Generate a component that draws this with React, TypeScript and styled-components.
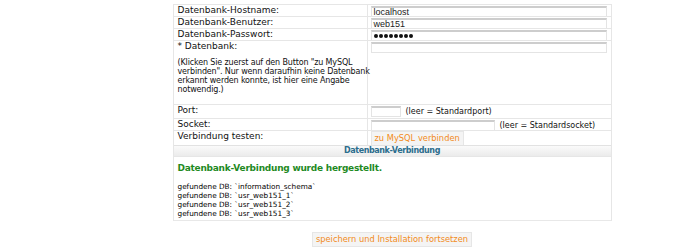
import * as React from "react";
import styled, { createGlobalStyle } from "styled-components";

const Global = createGlobalStyle`
  html, body { margin: 0; padding: 0; background: #fff; }
  body { font-family: "DejaVu Sans", Verdana, sans-serif; font-size: 9px; color: #111; }
  * { box-sizing: border-box; }
`;

const Page = styled.div`
  width: 700px;
  height: 248px;
  overflow: hidden;
  display: flex;
  flex-direction: column;
  align-items: center;
  padding-top: 4px;
`;

const Form = styled.div`
  width: 439px;
  margin-left: 84px;
  border-left: 1px solid #e6e6e6;
  border-right: 1px solid #e6e6e6;
  display: flex;
  flex-direction: column;
`;

const Row = styled.div<{ $h: number }>`
  display: grid;
  grid-template-columns: 194px 1fr;
  height: ${(p) => p.$h}px;
  border-top: 1px solid #e6e6e6;
`;

const Label = styled.div`
  padding-left: 4px;
  border-right: 1px solid #e6e6e6;
  line-height: 11px;
  white-space: nowrap;
`;

const Hint = styled.p`
  margin: 6px 0 0;
  font-size: 8px;
  letter-spacing: -0.15px;
  line-height: 9px;
`;

const Cell = styled.div`
  display: flex;
  align-items: flex-start;
  gap: 5px;
  padding-left: 3px;
  white-space: nowrap;
`;

const Input = styled.div<{ $w: number }>`
  width: ${(p) => p.$w}px;
  height: 11px;
  margin-top: 1px;
  border: 1px solid #e4e4e4;
  border-top: 2px solid #cdcdcd;
  background: #fff;
  padding-left: 2px;
  display: flex;
  align-items: center;
  gap: 1px;
  font-family: "Liberation Sans", Arial, sans-serif;
  font-size: 9px;
  line-height: 8px;
  color: #222;
`;

const Dot = styled.span`
  width: 4px;
  height: 4px;
  border-radius: 50%;
  background: #111;
`;

const Note = styled.span`
  font-size: 8px;
  line-height: 13px;
`;

const Button = styled.div`
  display: inline-block;
  height: 15px;
  background: #f4f4f4;
  border: 1px solid #e6e6e6;
  color: #f28b22;
  font-size: 8.3px;
  padding: 0 3px;
  line-height: 13px;
  white-space: nowrap;
`;

const Header = styled.div`
  height: 12px;
  border-top: 1px solid #e2e2e2;
  border-bottom: 1px solid #e6e6e6;
  background: linear-gradient(#fafafa, #ebebeb);
  text-align: center;
  font-size: 8px;
  font-weight: bold;
  letter-spacing: -0.4px;
  color: #2b6d8d;
  line-height: 10px;
`;

const Result = styled.div`
  border-bottom: 1px solid #e8e8e8;
  padding: 6px 4px 2px;
`;

const Success = styled.div`
  color: #1f8a1f;
  font-weight: bold;
  letter-spacing: -0.25px;
  line-height: 11px;
  margin-bottom: 8px;
`;

const Found = styled.div`
  font-size: 7.3px;
  line-height: 9px;
  color: #000;
`;

const Footer = styled.div`
  margin-top: 11px;
  margin-left: 84px;
`;

const dbs = ["information_schema", "usr_web151_1", "usr_web151_2", "usr_web151_3"];

export default function App() {
  return (
    <Page>
      <Global />
      <Form>
        <Row $h={12}>
          <Label>Datenbank-Hostname:</Label>
          <Cell><Input $w={236}>localhost</Input></Cell>
        </Row>
        <Row $h={12}>
          <Label>Datenbank-Benutzer:</Label>
          <Cell><Input $w={236}>web151</Input></Cell>
        </Row>
        <Row $h={12}>
          <Label>Datenbank-Passwort:</Label>
          <Cell>
            <Input $w={236}>
              {Array.from({ length: 8 }, (_, i) => <Dot key={i} />)}
            </Input>
          </Cell>
        </Row>
        <Row $h={64}>
          <Label>
            * Datenbank:
            <Hint>
              (Klicken Sie zuerst auf den Button "zu MySQL<br />
              verbinden". Nur wenn daraufhin keine Datenbank<br />
              erkannt werden konnte, ist hier eine Angabe<br />
              notwendig.)
            </Hint>
          </Label>
          <Cell><Input $w={236} /></Cell>
        </Row>
        <Row $h={14}>
          <Label>Port:</Label>
          <Cell><Input $w={30} /><Note>(leer = Standardport)</Note></Cell>
        </Row>
        <Row $h={12}>
          <Label>Socket:</Label>
          <Cell><Input $w={124} /><Note>(leer = Standardsocket)</Note></Cell>
        </Row>
        <Row $h={15}>
          <Label>Verbindung testen:</Label>
          <Cell><Button>zu MySQL verbinden</Button></Cell>
        </Row>
        <Header>Datenbank-Verbindung</Header>
        <Result>
          <Success>Datenbank-Verbindung wurde hergestellt.</Success>
          {dbs.map((d) => (
            <Found key={d}>gefundene DB: `{d}`</Found>
          ))}
        </Result>
      </Form>
      <Footer>
        <Button>speichern und Installation fortsetzen</Button>
      </Footer>
    </Page>
  );
}
